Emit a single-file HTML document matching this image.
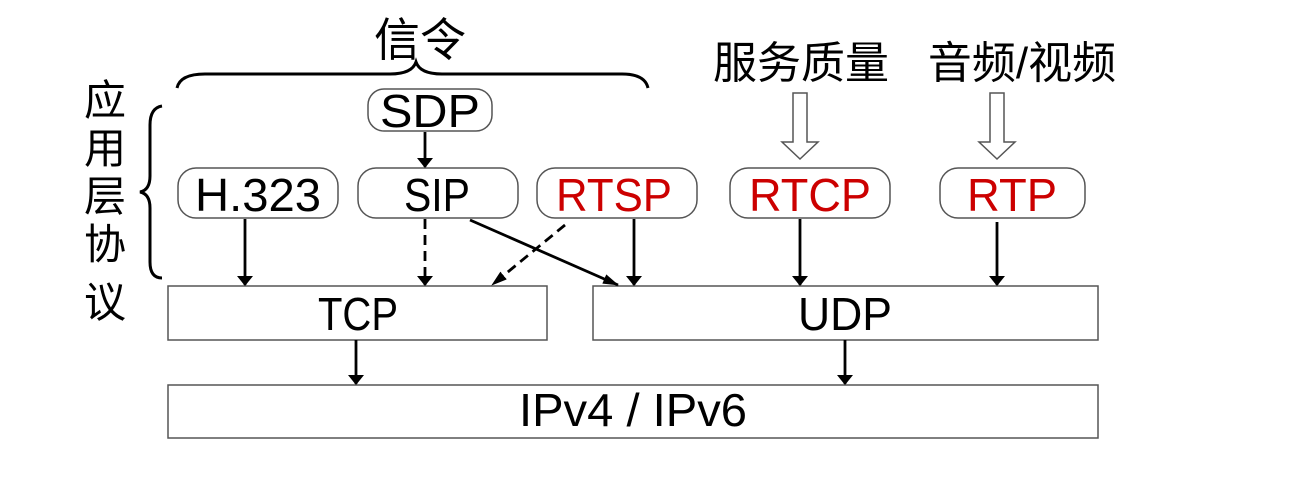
<!DOCTYPE html><html><head><style>body{margin:0;background:#fff}svg{display:block}text{font-family:"Liberation Sans","Noto Sans CJK SC",sans-serif}</style></head><body>
<svg width="1306" height="480" viewBox="0 0 1306 480">
<defs><marker id="a" markerWidth="10" markerHeight="16" refX="9" refY="8" orient="auto" markerUnits="userSpaceOnUse"><path d="M0,0 L10,8 L0,16z" fill="#000"/></marker>
<marker id="d" markerWidth="16" markerHeight="10" refX="15" refY="5" orient="auto" markerUnits="userSpaceOnUse"><path d="M0,0 L16,5 L0,10z" fill="#000"/></marker></defs>
<g font-size="46" text-anchor="middle">
<text x="420" y="56">信令</text>
<text x="801" y="78" font-size="44">服务质量</text>
<text x="1022" y="78" font-size="44">音频/视频</text>
</g>
<g font-size="42" text-anchor="middle">
<text x="105" y="115">应</text><text x="105" y="163">用</text><text x="105" y="211">层</text><text x="105" y="259">协</text><text x="105" y="317">议</text>
</g>
<path d="M177,88 Q180,74 205,74 L390,74 Q412,74 416,62 Q420,74 442,74 L622,74 Q645,74 648,88" fill="none" stroke="#000" stroke-width="3"/>
<path d="M162,106 Q150,108 150,125 L150,176 Q150,190 140,192 Q150,194 150,208 L150,262 Q150,278 162,278" fill="none" stroke="#000" stroke-width="3"/>
<g fill="#fff" stroke="#555" stroke-width="1.5">
<rect x="368" y="89" width="124" height="42" rx="16"/>
<rect x="178" y="168" width="160" height="50" rx="18"/>
<rect x="358" y="168" width="160" height="50" rx="18"/>
<rect x="537" y="168" width="160" height="50" rx="18"/>
<rect x="730" y="168" width="160" height="50" rx="18"/>
<rect x="940" y="168" width="145" height="50" rx="18"/>
<rect x="168" y="286" width="379" height="54"/>
<rect x="593" y="286" width="505" height="54"/>
<rect x="168" y="385" width="930" height="53"/>
</g>
<g font-size="46" text-anchor="middle" lengthAdjust="spacingAndGlyphs">
<text x="430" y="127" textLength="100" lengthAdjust="spacingAndGlyphs">SDP</text>
<text x="258" y="211" textLength="126" lengthAdjust="spacingAndGlyphs">H.323</text>
<text x="437" y="211" textLength="66" lengthAdjust="spacingAndGlyphs">SIP</text>
<text x="614" y="211" fill="#c00" textLength="116" lengthAdjust="spacingAndGlyphs">RTSP</text>
<text x="810" y="211" fill="#c00" textLength="122" lengthAdjust="spacingAndGlyphs">RTCP</text>
<text x="1012" y="211" fill="#c00" textLength="90" lengthAdjust="spacingAndGlyphs">RTP</text>
<text x="358" y="330" textLength="80" lengthAdjust="spacingAndGlyphs">TCP</text>
<text x="845" y="330" textLength="94" lengthAdjust="spacingAndGlyphs">UDP</text>
<text x="633" y="426" textLength="228" lengthAdjust="spacingAndGlyphs">IPv4 / IPv6</text>
</g>
<g stroke="#000" stroke-width="2.8" fill="none">
<path d="M425,132 V167" marker-end="url(#a)"/>
<path d="M245,219 V285" marker-end="url(#a)"/>
<path d="M425,219 V285" stroke-dasharray="10,6" marker-end="url(#a)"/>
<path d="M634,219 V285" marker-end="url(#a)"/>
<path d="M800,219 V285" marker-end="url(#a)"/>
<path d="M997,222 V285" marker-end="url(#a)"/>
<path d="M470,220 L618,285" marker-end="url(#d)"/>
<path d="M565,225 L492,285" stroke-dasharray="10,6" marker-end="url(#d)"/>
<path d="M356,340 V384" marker-end="url(#a)"/>
<path d="M845,340 V384" marker-end="url(#a)"/>
</g>
<g fill="#fff" stroke="#555" stroke-width="1.5">
<path d="M793,93 H807 V142 H818 L800,159 L782,142 H793Z"/>
<path d="M990,93 H1004 V142 H1015 L997,159 L979,142 H990Z"/>
</g>
</svg></body></html>
